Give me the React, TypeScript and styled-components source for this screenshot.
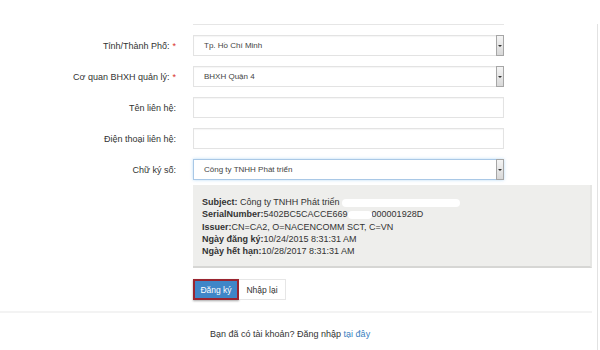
import React from "react";
import styled, { createGlobalStyle } from "styled-components";

const Global = createGlobalStyle`
  html, body { margin: 0; padding: 0; background: #fff; }
  body { font-family: "Liberation Sans", Arial, sans-serif; color: #333; }
`;

const Page = styled.div`
  position: relative;
  width: 600px;
  height: 350px;
  overflow: hidden;
  display: flex;
`;

const Main = styled.div`
  width: 592px;
  display: flex;
  flex-direction: column;
`;

const SideLine = styled.div`
  width: 1px;
  margin-left: 5px;
  margin-top: 24px;
  background: #e2e2e2;
`;

const TopStub = styled.div`
  margin-left: 193px;
  width: 311px;
  height: 25px;
  border-bottom: 1px solid #e6e6e6;
  box-sizing: border-box;
`;

const Form = styled.div`
  display: grid;
  grid-template-columns: 176px 311px;
  column-gap: 17px;
  row-gap: 10px;
  margin-top: 10px;
  align-items: center;
`;

const Label = styled.div`
  text-align: right;
  font-size: 9px;
  color: #333;
  white-space: nowrap;
`;

const Req = styled.span`
  color: #d9302c;
  margin-left: 3px;
`;

const Field = styled.div<{ $focus?: boolean }>`
  position: relative;
  height: 21px;
  box-sizing: border-box;
  border: 1px solid ${(p) => (p.$focus ? "#a9c8e6" : "#e3e3e3")};
  box-shadow: ${(p) =>
    p.$focus ? "0 0 3px rgba(102,175,233,0.45)" : "inset 0 1px 1px rgba(0,0,0,0.04)"};
  background: #fff;
  display: flex;
  align-items: center;
  padding-left: 10px;
  font-size: 8px;
  color: #444;
`;

const DropBtn = styled.div`
  position: absolute;
  right: -1px;
  top: -1px;
  bottom: -1px;
  width: 8px;
  border: 1px solid #a6a6a6;
  box-sizing: border-box;
  background: linear-gradient(#f4f4f4, #d8d8d8);
  display: flex;
  align-items: center;
  justify-content: center;
  &::after {
    content: "";
    border-left: 2px solid transparent;
    border-right: 2px solid transparent;
    border-top: 2px solid #333;
  }
`;

const InfoBox = styled.div`
  margin-left: 193px;
  margin-top: 5px;
  width: 399px;
  height: 83px;
  box-sizing: border-box;
  background: #eeeeec;
  border-bottom: 2px solid #d6d6d4;
  border-right: 2px solid #e6e6e4;
  padding: 11px 9px 0;
  font-size: 9px;
  line-height: 12.3px;
  color: #333;
`;

const Line = styled.div`
  white-space: nowrap;
`;

const B = styled.b`
  font-weight: bold;
`;

const Redact = styled.span<{ $w: number }>`
  display: inline-block;
  width: ${(p) => p.$w}px;
  height: 8px;
  background: #fff;
  border-radius: 4px;
  vertical-align: middle;
  filter: blur(0.6px);
`;

const Buttons = styled.div`
  margin-left: 193px;
  margin-top: 11px;
  display: flex;
`;

const Primary = styled.div`
  width: 46px;
  height: 21px;
  box-sizing: border-box;
  background: #3f86c8;
  border: 2px solid #9a2530;
  box-shadow: 0 1px 2px rgba(0,0,0,0.35);
  color: #fff;
  font-size: 8.5px;
  display: flex;
  align-items: center;
  justify-content: center;
`;

const Secondary = styled.div`
  width: 47px;
  height: 21px;
  box-sizing: border-box;
  background: #fff;
  border: 1px solid #e6e6e6;
  border-left: none;
  color: #333;
  font-size: 8.5px;
  display: flex;
  align-items: center;
  justify-content: center;
`;

const Separator = styled.div`
  margin-top: 11px;
  height: 2px;
  background: #f3f3f3;
`;

const Footer = styled.div`
  padding-left: 210px;
  margin-top: 16px;
  font-size: 9px;
  color: #333;
`;

const Link = styled.a`
  color: #3a7fc0;
  text-decoration: none;
`;

export default function App() {
  return (
    <>
      <Global />
      <Page>
        <Main>
          <TopStub />
          <Form>
            <Label>
              Tỉnh/Thành Phố:<Req>*</Req>
            </Label>
            <Field>
              Tp. Hồ Chí Minh
              <DropBtn />
            </Field>
            <Label>
              Cơ quan BHXH quản lý:<Req>*</Req>
            </Label>
            <Field>
              BHXH Quận 4
              <DropBtn />
            </Field>
            <Label>Tên liên hệ:</Label>
            <Field />
            <Label>Điện thoại liên hệ:</Label>
            <Field />
            <Label>Chữ ký số:</Label>
            <Field $focus>
              Công ty TNHH Phát triển
              <DropBtn />
            </Field>
          </Form>
          <InfoBox>
            <Line>
              <B>Subject:</B> Công ty TNHH Phát triển <Redact $w={118} />
            </Line>
            <Line>
              <B>SerialNumber:</B>5402BC5CACCE669
              <Redact $w={24} />
              000001928D
            </Line>
            <Line>
              <B>Issuer:</B>CN=CA2, O=NACENCOMM SCT, C=VN
            </Line>
            <Line>
              <B>Ngày đăng ký:</B>10/24/2015 8:31:31 AM
            </Line>
            <Line>
              <B>Ngày hết hạn:</B>10/28/2017 8:31:31 AM
            </Line>
          </InfoBox>
          <Buttons>
            <Primary>Đăng ký</Primary>
            <Secondary>Nhập lại</Secondary>
          </Buttons>
          <Separator />
          <Footer>
            Bạn đã có tài khoản? Đăng nhập <Link href="#">tại đây</Link>
          </Footer>
        </Main>
        <SideLine />
      </Page>
    </>
  );
}
